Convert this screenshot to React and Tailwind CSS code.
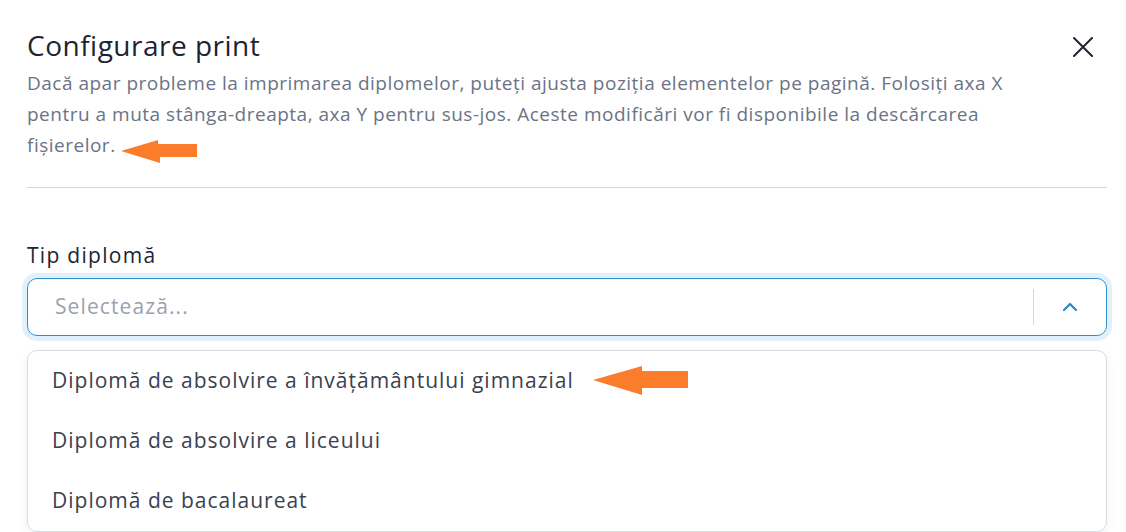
import React from "react";

export default function App() {
  const items = [
    "Diplomă de absolvire a învățământului gimnazial",
    "Diplomă de absolvire a liceului",
    "Diplomă de bacalaureat",
  ];
  return (
    <div className="relative w-[1126px] h-[532px] overflow-hidden bg-white font-['Open_Sans',sans-serif]">
      <div className="pl-[27px] pr-[19px] pt-[27px]">
        <div className="flex items-center justify-between">
          <h1 className="text-[28px] leading-[36px] tracking-[0.5px] text-[#1c2433] font-normal">Configurare print</h1>
          <svg width="20" height="20" viewBox="0 0 20 20" className="mr-[14px] mt-[3px]" fill="none" stroke="#1f2430" strokeWidth="2" strokeLinecap="round">
            <path d="M1 1 L19 19 M19 1 L1 19" />
          </svg>
        </div>
        <p className="mt-[5px] text-[19px] leading-[31px] tracking-[0.5px] text-[#6b7385]">
          Dacă apar probleme la imprimarea diplomelor, puteți ajusta poziția elementelor pe pagină. Folosiți axa X
          <br />
          pentru a muta stânga-dreapta, axa Y pentru sus-jos. Aceste modificări vor fi disponibile la descărcarea
          <br />
          fișierelor.
        </p>
        <div className="mt-[26px] h-px bg-[#d5d9de]" />
        <label className="block mt-[53px] text-[21px] leading-[28px] tracking-[1.3px] text-[#1c2433]">Tip diplomă</label>
        <div className="mt-[9px] h-[58px] flex items-center rounded-[10px] border border-[#2e8fcb] ring-[5px] ring-[#e1f1fc]">
          <span className="flex-1 pl-[27px] text-[21px] tracking-[1.1px] text-[#9aa1ad]">Selectează...</span>
          <div className="w-px h-[36px] bg-[#d4d7dc]" />
          <div className="w-[72px] flex justify-center">
            <svg width="16" height="10" viewBox="0 0 16 10" fill="none" stroke="#2b86c1" strokeWidth="2.2" strokeLinecap="round" strokeLinejoin="round">
              <path d="M2 8 L8 2 L14 8" />
            </svg>
          </div>
        </div>
        <div className="mt-[14px] rounded-[10px] border border-[#d8dbe0] shadow-[0_4px_12px_rgba(0,0,0,0.06)] bg-white">
          {items.map((t) => (
            <div key={t} className="h-[60px] flex items-center pl-[24px] text-[21px] tracking-[1px] text-[#3a4150]">
              {t}
            </div>
          ))}
        </div>
      </div>
      <svg className="absolute left-0 top-0 pointer-events-none" width="1126" height="532">
        <polygon points="121,151 158,140 158,144 197,144 197,157 160,157 160,163" fill="#fb7d2b" />
        <polygon points="593,380 642,366 642,371 688,371 688,388 642,388 642,395" fill="#fb7d2b" />
      </svg>
    </div>
  );
}
